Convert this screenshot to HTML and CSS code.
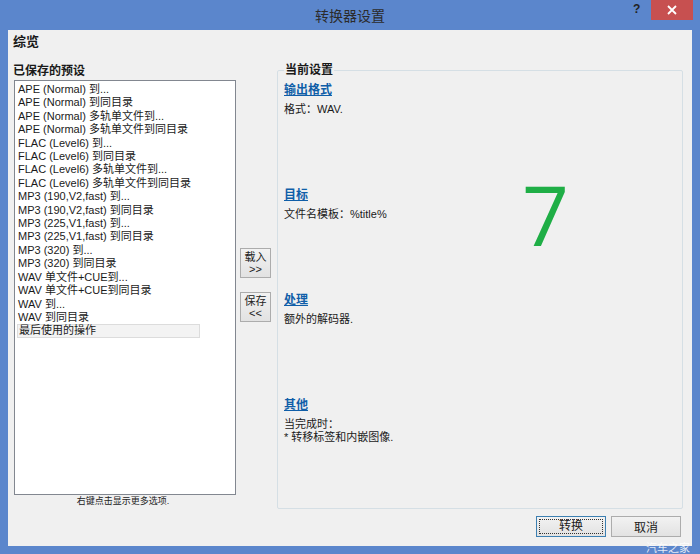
FILE: index.html
```html
<!DOCTYPE html>
<html lang="zh-CN">
<head>
    <meta charset="UTF-8">
    <title>转换器设置</title>
    <link rel="stylesheet" href="styles.css">
</head>
<body>

    <div class="window">
        <div class="titlebar">
            <span class="title">转换器设置</span>
            <span class="help">?</span>
            <span class="close">
                <svg width="10" height="10" viewBox="0 0 10 10">
                    <path d="M1 1 L9 9 M9 1 L1 9" stroke="#fff" stroke-width="1.8"/>
                </svg>
            </span>
        </div>

        <div class="client">
            <div class="heading">综览</div>

            <div class="main">
                <div class="presets">
                    <div class="label">已保存的预设</div>
                    <ul class="list">
                        <li>APE (Normal) 到...</li>
                        <li>APE (Normal) 到同目录</li>
                        <li>APE (Normal) 多轨单文件到...</li>
                        <li>APE (Normal) 多轨单文件到同目录</li>
                        <li>FLAC (Level6) 到...</li>
                        <li>FLAC (Level6) 到同目录</li>
                        <li>FLAC (Level6) 多轨单文件到...</li>
                        <li>FLAC (Level6) 多轨单文件到同目录</li>
                        <li>MP3 (190,V2,fast) 到...</li>
                        <li>MP3 (190,V2,fast) 到同目录</li>
                        <li>MP3 (225,V1,fast) 到...</li>
                        <li>MP3 (225,V1,fast) 到同目录</li>
                        <li>MP3 (320) 到...</li>
                        <li>MP3 (320) 到同目录</li>
                        <li>WAV 单文件+CUE到...</li>
                        <li>WAV 单文件+CUE到同目录</li>
                        <li>WAV 到...</li>
                        <li>WAV 到同目录</li>
                        <li class="last">最后使用的操作</li>
                    </ul>
                    <div class="hint">右键点击显示更多选项.</div>
                </div>

                <div class="arrows">
                    <button class="small-btn">载入<br>&gt;&gt;</button>
                    <button class="small-btn">保存<br>&lt;&lt;</button>
                </div>

                <fieldset class="current">
                    <legend>当前设置</legend>
                    <div class="section">
                        <a class="link">输出格式</a>
                        <p>格式：WAV.</p>
                    </div>
                    <div class="section">
                        <a class="link">目标</a>
                        <p>文件名模板：%title%</p>
                    </div>
                    <div class="section">
                        <a class="link">处理</a>
                        <p>额外的解码器.</p>
                    </div>
                    <div class="section">
                        <a class="link">其他</a>
                        <p>当完成时：<br>* 转移标签和内嵌图像.</p>
                    </div>
                    <span class="step">7</span>
                </fieldset>
            </div>

            <div class="footer">
                <button class="btn default"><span>转换</span></button>
                <button class="btn">取消</button>
            </div>
        </div>

        <span class="watermark">汽车之家</span>
    </div>

</body>
</html>
```

FILE: styles.css
```css
* {
    margin: 0;
    padding: 0;
    box-sizing: border-box;
}

body {
    background: #5b86cc;
    font-family: "Liberation Sans", "Noto Sans CJK SC", sans-serif;
    font-size: 11px;
    color: #1a1a1a;
}

.window {
    position: relative;
    width: 700px;
    height: 554px;
    background: #5b86cc;
}

.titlebar {
    position: relative;
    height: 30px;
    display: flex;
    justify-content: center;
    align-items: center;
}

.title {
    font-size: 14px;
    color: #2b2b2b;
}

.help {
    position: absolute;
    left: 633px;
    top: 2px;
    font-size: 12px;
    font-weight: bold;
    color: #222;
}

.close {
    position: absolute;
    left: 651px;
    top: 0;
    width: 42px;
    height: 20px;
    background: #c75050;
    display: flex;
    justify-content: center;
    align-items: center;
}

.client {
    margin: 0 8px;
    height: 516px;
    background: #f0f0f0;
    padding: 34px 0 0 0;
    position: relative;
}

.heading {
    position: absolute;
    left: 5px;
    top: 4px;
    font-size: 13px;
    font-weight: bold;
    line-height: 16px;
}

.main {
    display: flex;
    align-items: flex-start;
}

.presets {
    margin-left: 6px;
    width: 222px;
}

.label {
    font-weight: bold;
    font-size: 12px;
    line-height: 14px;
    margin-left: -1px;
    margin-bottom: 2px;
}

.list {
    list-style: none;
    height: 415px;
    background: #fff;
    border: 1px solid #828790;
    padding: 2px 0 0 2px;
}

.list li {
    line-height: 13.4px;
    padding-left: 1px;
    white-space: nowrap;
}

.list li.last {
    width: 183px;
    background: #f3f3f3;
    border: 1px solid #dcdcdc;
    line-height: 11.4px;
}

.hint {
    text-align: center;
    font-size: 9px;
    line-height: 12px;
    color: #222;
    padding-right: 4px;
}

.arrows {
    margin-left: 4px;
    width: 31px;
    display: flex;
    flex-direction: column;
    gap: 14px;
    padding-top: 184px;
}

.small-btn {
    width: 31px;
    height: 30px;
    font-family: inherit;
    font-size: 11px;
    line-height: 12px;
    color: #222;
    background: linear-gradient(#f2f2f2, #e2e2e2);
    border: 1px solid #acacac;
}

.current {
    margin-left: 6px;
    width: 406px;
    height: 446px;
    border: 1px solid #d5dfe5;
    border-radius: 2px;
    padding: 0 6px;
    position: relative;
    margin-top: -1px;
}

.current legend {
    font-size: 12px;
    font-weight: bold;
    line-height: 14px;
    padding: 0 1px;
}

.section {
    height: 105px;
}

.section:first-of-type {
    margin-top: 5px;
}

.link {
    display: block;
    font-weight: bold;
    font-size: 12px;
    line-height: 16px;
    color: #0f5ea8;
    text-decoration: underline;
    margin-bottom: 5px;
}

.section p {
    line-height: 13px;
}

.step {
    position: absolute;
    left: 244px;
    top: 96px;
    font-family: "Open Sans", "Liberation Sans", sans-serif;
    font-size: 82px;
    line-height: 82px;
    color: #1fae46;
}

.footer {
    display: flex;
    justify-content: flex-end;
    gap: 5px;
    padding: 7px 11px 0 0;
}

.btn {
    width: 70px;
    height: 21px;
    font-family: inherit;
    font-size: 12px;
    color: #1a1a1a;
    background: linear-gradient(#f2f2f2, #e2e2e2);
    border: 1px solid #acacac;
}

.btn.default {
    border-color: #3c7fb1;
    padding: 2px;
}

.btn.default span {
    display: block;
    height: 100%;
    border: 1px dotted #333;
    line-height: 13px;
}

.watermark {
    position: absolute;
    left: 646px;
    top: 539px;
    font-family: "Noto Sans CJK SC", sans-serif;
    font-size: 11px;
    color: rgba(255, 255, 255, 0.85);
}
```
